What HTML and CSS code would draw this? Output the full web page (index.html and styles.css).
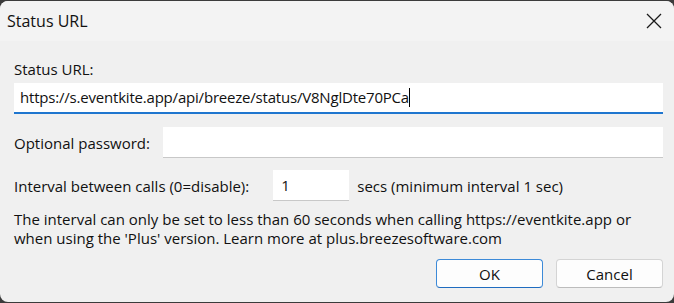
FILE: index.html
```html
<!DOCTYPE html>
<html lang="en">
<head>
  <meta charset="UTF-8" />
  <title>Status URL</title>
  <link rel="stylesheet" href="styles.css">
</head>
<body>

  <div class="dialog">
    <div class="title-bar">
      <span class="title">Status URL</span>
      <span class="close">
        <svg width="16" height="16" viewBox="0 0 16 16">
          <path d="M1 1 L15 15 M15 1 L1 15" stroke="#1a1a1a" stroke-width="1.3" fill="none"/>
        </svg>
      </span>
    </div>

    <div class="content">
      <div class="label">Status URL:</div>
      <div class="field url-field">https://s.eventkite.app/api/breeze/status/V8NglDte70PCa<span class="caret"></span></div>

      <div class="row password-row">
        <div class="label">Optional password:</div>
        <div class="field password-field"></div>
      </div>

      <div class="row interval-row">
        <div class="label">Interval between calls (0=disable):</div>
        <div class="field interval-field">1</div>
        <div class="label">secs (minimum interval 1 sec)</div>
      </div>

      <p class="note">The interval can only be set to less than 60 seconds when calling https://eventkite.app or<br>when using the 'Plus' version. Learn more at plus.breezesoftware.com</p>

      <div class="buttons">
        <button class="btn default">OK</button>
        <button class="btn">Cancel</button>
      </div>
    </div>
  </div>

</body>
</html>
```

FILE: styles.css
```css
* {
  box-sizing: border-box;
}

html {
  background-color: #3b3b3b;
}

body {
  margin: 0;
  font-family: 'Open Sans', 'Noto Sans', sans-serif;
  font-size: 15px;
  color: #111;
}

.dialog {
  width: 674px;
  height: 301px;
  margin-top: 1px;
  background-color: #f0f0f0;
  border-radius: 8px;
  overflow: hidden;
}

.title-bar {
  display: flex;
  justify-content: space-between;
  align-items: center;
  height: 40px;
  padding: 0 12px 0 7px;
  background-color: #f3f3f3;
}

.title {
  font-size: 16px;
}

.close {
  display: flex;
}

.content {
  padding: 18px 11px 0 14px;
}

.label {
  line-height: 20px;
  white-space: nowrap;
}

.field {
  height: 31px;
  background-color: #fff;
  border-bottom: 1px solid #c8c8c8;
  padding: 0 6px;
  line-height: 30px;
}

.url-field {
  margin-top: 4px;
  border-bottom: 2px solid #1f76cf;
  line-height: 29px;
  letter-spacing: -0.2px;
}

.caret {
  display: inline-block;
  width: 1px;
  height: 19px;
  background-color: #000;
  vertical-align: -4px;
}

.row {
  display: flex;
  align-items: center;
}

.password-row {
  margin-top: 13px;
  gap: 13px;
}

.password-field {
  flex: 1;
}

.interval-row {
  margin-top: 12px;
}

.interval-field {
  width: 76px;
  margin: 0 8px 0 24px;
  padding: 0 8px;
}

.note {
  margin: 9px 0 0;
  line-height: 19px;
  white-space: nowrap;
}

.buttons {
  display: flex;
  justify-content: flex-end;
  gap: 13px;
  margin-top: 11px;
}

.btn {
  width: 107px;
  height: 29px;
  font-family: inherit;
  font-size: 15px;
  color: #111;
  background-color: #fdfdfd;
  border: 1px solid #d4d4d4;
  border-bottom-color: #bcbcbc;
  border-radius: 4px;
}

.btn.default {
  border-color: #3c8ad8;
  border-bottom-color: #1f6cc0;
}
```
